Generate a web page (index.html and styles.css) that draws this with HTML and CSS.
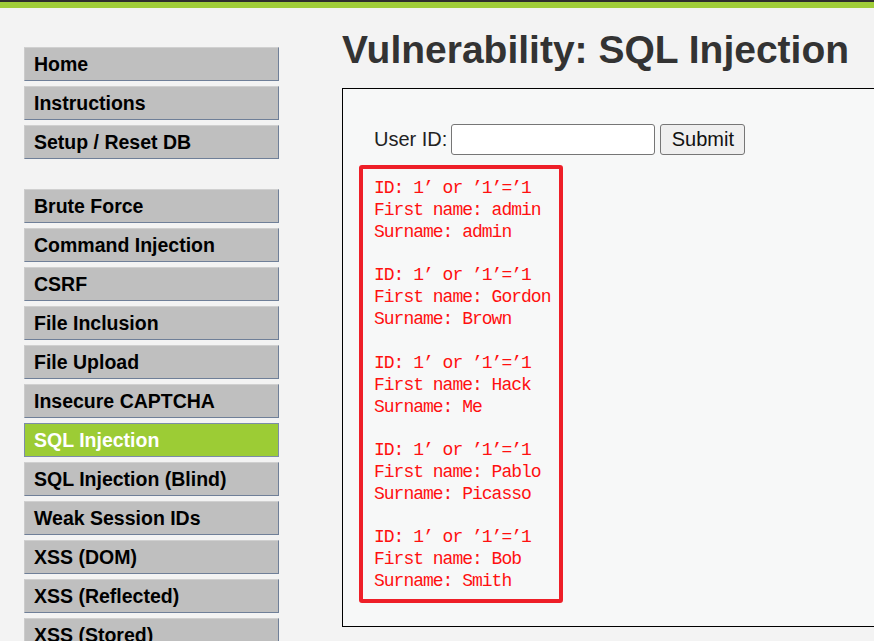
FILE: index.html
```html
<!DOCTYPE html>
<html>
<head>
<meta charset="utf-8">
<title>Vulnerability: SQL Injection</title>
<link rel="stylesheet" href="styles.css">
</head>
<body>
<div class="header"></div>
<div class="page">
  <nav class="menu">
    <ul class="menu-group">
      <li><a href="#">Home</a></li>
      <li><a href="#">Instructions</a></li>
      <li><a href="#">Setup / Reset DB</a></li>
    </ul>
    <ul class="menu-group">
      <li><a href="#">Brute Force</a></li>
      <li><a href="#">Command Injection</a></li>
      <li><a href="#">CSRF</a></li>
      <li><a href="#">File Inclusion</a></li>
      <li><a href="#">File Upload</a></li>
      <li><a href="#">Insecure CAPTCHA</a></li>
      <li class="selected"><a href="#">SQL Injection</a></li>
      <li><a href="#">SQL Injection (Blind)</a></li>
      <li><a href="#">Weak Session IDs</a></li>
      <li><a href="#">XSS (DOM)</a></li>
      <li><a href="#">XSS (Reflected)</a></li>
      <li><a href="#">XSS (Stored)</a></li>
    </ul>
  </nav>
  <main class="main">
    <h1 class="title">Vulnerability: SQL Injection</h1>
    <div class="vulnerable-code">
      <form class="id-form">
        <label class="id-label" for="uid">User ID:</label>
        <input class="id-input" id="uid" type="text">
        <button class="submit" type="button">Submit</button>
      </form>
      <div class="result">
        <pre>ID: 1’ or ’1’=’1
First name: admin
Surname: admin</pre>
        <pre>ID: 1’ or ’1’=’1
First name: Gordon
Surname: Brown</pre>
        <pre>ID: 1’ or ’1’=’1
First name: Hack
Surname: Me</pre>
        <pre>ID: 1’ or ’1’=’1
First name: Pablo
Surname: Picasso</pre>
        <pre>ID: 1’ or ’1’=’1
First name: Bob
Surname: Smith</pre>
      </div>
    </div>
  </main>
</div>
</body>
</html>
```
FILE: styles.css
```css
html, body {
  margin: 0;
  padding: 0;
}
body {
  background: #f3f3f3;
  font-family: "Liberation Sans", Arial, sans-serif;
  overflow: hidden;
  width: 874px;
  height: 641px;
}
.header {
  height: 2px;
  background: #2e2e2e;
  border-bottom: 6px solid #a0cd39;
}
.page {
  display: flex;
  align-items: flex-start;
}
.menu {
  margin-left: 24px;
  margin-top: 39px;
  width: 255px;
  flex: none;
}
.menu-group {
  list-style: none;
  margin: 0 0 30px 0;
  padding: 0;
}
.menu-group li {
  margin-bottom: 5px;
}
.menu-group a {
  display: block;
  background: #bfbfbf;
  color: #000;
  text-decoration: none;
  font-weight: bold;
  font-size: 19.5px;
  line-height: 22px;
  padding: 5px 9px;
  border-top: 1px solid #d0d0d0;
  border-left: 1px solid #cbcbcb;
  border-right: 1px solid #6f7f98;
  border-bottom: 1px solid #6f7f98;
  white-space: nowrap;
}
.menu-group li.selected a {
  background: #9ccc35;
  color: #fff;
  border-color: #7c8ca8;
}
.main {
  margin-left: 63px;
  flex: 1;
  min-width: 0;
}
.title {
  margin: 19px 0 16px 0;
  font-size: 39px;
  line-height: 45px;
  font-weight: bold;
  color: #333;
  white-space: nowrap;
}
.vulnerable-code {
  background: #f7f8f8;
  border: 1px solid #000;
  border-right: none;
  padding: 35px 0 23px 16px;
}
.id-form {
  display: flex;
  align-items: center;
  margin: 0 0 10px 15px;
}
.id-label {
  font-size: 20px;
  color: #222;
  margin-right: 4px;
}
.id-input {
  box-sizing: border-box;
  width: 204px;
  height: 31px;
  border: 1px solid #767676;
  border-radius: 3px;
  background: #fff;
  margin: 0 5px 0 0;
  padding: 0 4px;
}
.submit {
  box-sizing: border-box;
  width: 85px;
  height: 31px;
  border: 1px solid #767676;
  border-radius: 3px;
  background: #efefef;
  font-family: "Liberation Sans", Arial, sans-serif;
  font-size: 20px;
  color: #111;
  padding: 0;
}
.result {
  box-sizing: border-box;
  width: 204px;
  border: 4px solid #ee1f28;
  border-radius: 3px;
  padding: 8px 0 7px 11px;
}
.result pre {
  margin: 0 0 21.3px 0;
  font-family: "Liberation Mono", "Courier New", monospace;
  font-size: 18px;
  letter-spacing: -1px;
  line-height: 22px;
  color: #ff1010;
}
.result pre:last-child {
  margin-bottom: 0;
}
```
